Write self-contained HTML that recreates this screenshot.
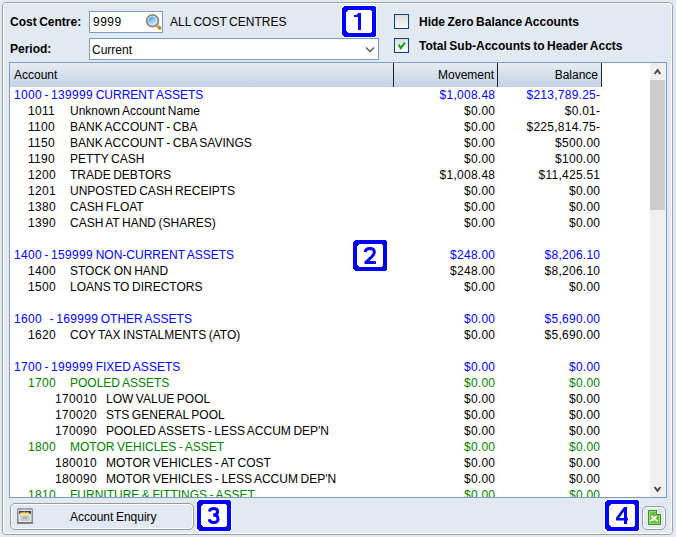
<!DOCTYPE html>
<html><head><meta charset="utf-8">
<style>
*{box-sizing:border-box;margin:0;padding:0}
html,body{width:676px;height:537px;overflow:hidden;background:#e3e9f3;font-family:"Liberation Sans",sans-serif;font-size:12px;color:#000;word-spacing:-0.8px}
.abs{position:absolute}
.frame{position:absolute;left:2px;top:2px;width:671px;height:533px;border:1px solid #a0a0a0;border-radius:4px}
.frame2{position:absolute;left:3px;top:3px;width:669px;height:531px;border:1px solid #fff;border-radius:3px}
.lbl{position:absolute;font-weight:bold;white-space:nowrap;letter-spacing:0;line-height:14px}
.txt{position:absolute;white-space:nowrap;line-height:14px}
.field{position:absolute;background:#fff;border:1px solid #7f9db9}
.badge{position:absolute;width:34px;height:31px;background:#0000ff;}
.badge i{position:absolute;left:4px;top:4px;width:26px;height:23px;background:#fff;}
.badge b{position:absolute;left:0;top:0;width:34px;height:31px;text-align:center;color:#0000ff;font-size:23px;line-height:31px;font-weight:bold}
.cb{position:absolute;width:15px;height:15px;border:1px solid #0e3f78;background:linear-gradient(#dcdcd7,#fbfbfa)}
.tbl{position:absolute;left:9px;top:62px;width:658px;height:436px;border:1px solid #7b9ebd;background:#fff;overflow:hidden}
.hdr{position:absolute;left:0;top:0;width:591px;height:24px;background:linear-gradient(#e6ecf4,#c4d2e3)}
.sep{position:absolute;top:0;width:1px;height:24px;background:#222}
.rows{position:absolute;left:0;top:24px;width:640px}
.r{position:relative;height:16px;line-height:16px;white-space:nowrap}
.r>span{position:absolute;top:0}
.c0{left:4px}.c1{left:18px}.n1{left:60px}.c2{left:45px}.n2{left:96px}.mv{right:154.75px;letter-spacing:.25px}.bl{right:49.75px;letter-spacing:.25px}.c1,.c2,.dg{letter-spacing:.33px}
.b{color:#0000ff}.g{color:#008000}
.btn{position:absolute;border:1px solid #9a9a9a;border-radius:5px;box-shadow:inset 0 0 0 1px #fff;background:#e3e9f3}
.sb{position:absolute;left:640px;top:0;width:16px;height:434px;background:#f0f0f0}
.thumb{position:absolute;left:0;top:17px;width:15px;height:130px;background:#cdcdcd}
</style></head><body>
<div class="frame"></div><div class="frame2"></div>

<div class="lbl" style="left:10px;top:15px">Cost Centre:</div>
<div class="field" style="left:89px;top:11px;width:74px;height:22px"></div>
<div class="txt" style="left:93px;top:15px;letter-spacing:.5px">9999</div>
<svg class="abs" style="left:144px;top:12px" width="20" height="20" viewBox="0 0 20 20">
<defs><linearGradient id="lens" x1="0.2" y1="0.1" x2="0.8" y2="0.9"><stop offset="0" stop-color="#4d9be6"/><stop offset="0.55" stop-color="#9ad2f3"/><stop offset="1" stop-color="#c4ebfb"/></linearGradient>
<linearGradient id="hdl" x1="0" y1="0" x2="1" y2="1"><stop offset="0" stop-color="#e8f0f8"/><stop offset="0.45" stop-color="#f0b030"/><stop offset="1" stop-color="#c87a10"/></linearGradient></defs>
<path d="M12.6 13L15.8 16.2" stroke="#c0882a" stroke-width="3.2" stroke-linecap="round"/>
<path d="M12.6 13L15.6 16" stroke="url(#hdl)" stroke-width="1.8" stroke-linecap="round"/>
<circle cx="8.5" cy="8.7" r="5.8" fill="#fff" stroke="#888" stroke-width="1.9"/>
<circle cx="8.5" cy="8.7" r="4.3" fill="url(#lens)"/>
</svg>
<div class="txt" style="left:170px;top:15px">ALL COST CENTRES</div>
<div class="lbl" style="left:10px;top:42px">Period:</div>
<div class="field" style="left:89px;top:38px;width:290px;height:22px"></div>
<div class="txt" style="left:92px;top:43px">Current</div>
<svg class="abs" style="left:364px;top:45px" width="12" height="9" viewBox="0 0 12 9"><path d="M2 2.5L6 6.5L10 2.5" fill="none" stroke="#555" stroke-width="1.3"/></svg>


<svg class="abs" style="left:341px;top:5px" width="36" height="33" viewBox="0 0 36 33" shape-rendering="crispEdges"><path d="M2 0H34L36 2V31L34 33H2L0 31V2Z" fill="#fff" fill-opacity=".85"/><path d="M3 1H33L35 3V30L33 32H3L1 30V3Z" fill="#00f"/><path d="M7 5H29L31 7V26L29 28H7L5 26V7Z" fill="#fff"/><g shape-rendering="auto" transform="translate(1,1)"><path d="M12 9H14.5L16.2 7H19V24H16V11H12Z" fill="#00f"/></g></svg>

<div class="cb" style="left:394px;top:14px"></div>
<div class="lbl" style="left:419px;top:15px">Hide Zero Balance Accounts</div>
<div class="cb" style="left:394px;top:38px"></div>
<svg class="abs" style="left:394px;top:38px" width="15" height="15" viewBox="0 0 15 15"><path d="M4.7 6.6L6.7 10.2L10.9 4.7" fill="none" stroke="#1a9c1a" stroke-width="2"/></svg>
<div class="lbl" style="left:419px;top:39px">Total Sub-Accounts to Header Accts</div>

<div class="tbl">
  <div class="hdr">
    <div class="txt" style="left:4px;top:5px">Account</div>
    <div class="sep" style="left:383px"></div>
    <div class="txt" style="right:107px;top:5px">Movement</div>
    <div class="sep" style="left:487px"></div>
    <div class="txt" style="right:3px;top:5px">Balance</div>
    <div class="sep" style="left:591px"></div>
  </div>
  <div class="rows" id="rows">
<div class="r b"><span class="c0"><span class="dg">1000</span> - <span class="dg">139999</span> CURRENT ASSETS</span><span class="mv">$1,008.48</span><span class="bl">$213,789.25-</span></div>
<div class="r"><span class="c1">1011</span><span class="n1">Unknown Account Name</span><span class="mv">$0.00</span><span class="bl">$0.01-</span></div>
<div class="r"><span class="c1">1100</span><span class="n1">BANK ACCOUNT - CBA</span><span class="mv">$0.00</span><span class="bl">$225,814.75-</span></div>
<div class="r"><span class="c1">1150</span><span class="n1">BANK ACCOUNT - CBA SAVINGS</span><span class="mv">$0.00</span><span class="bl">$500.00</span></div>
<div class="r"><span class="c1">1190</span><span class="n1">PETTY CASH</span><span class="mv">$0.00</span><span class="bl">$100.00</span></div>
<div class="r"><span class="c1">1200</span><span class="n1">TRADE DEBTORS</span><span class="mv">$1,008.48</span><span class="bl">$11,425.51</span></div>
<div class="r"><span class="c1">1201</span><span class="n1">UNPOSTED CASH RECEIPTS</span><span class="mv">$0.00</span><span class="bl">$0.00</span></div>
<div class="r"><span class="c1">1380</span><span class="n1">CASH FLOAT</span><span class="mv">$0.00</span><span class="bl">$0.00</span></div>
<div class="r"><span class="c1">1390</span><span class="n1">CASH AT HAND (SHARES)</span><span class="mv">$0.00</span><span class="bl">$0.00</span></div>
<div class="r"></div>
<div class="r b"><span class="c0"><span class="dg">1400</span> - <span class="dg">159999</span> NON-CURRENT ASSETS</span><span class="mv">$248.00</span><span class="bl">$8,206.10</span></div>
<div class="r"><span class="c1">1400</span><span class="n1">STOCK ON HAND</span><span class="mv">$248.00</span><span class="bl">$8,206.10</span></div>
<div class="r"><span class="c1">1500</span><span class="n1">LOANS TO DIRECTORS</span><span class="mv">$0.00</span><span class="bl">$0.00</span></div>
<div class="r"></div>
<div class="r b"><span class="c0"><span class="dg">1600</span>&nbsp;&nbsp; - <span class="dg">169999</span> OTHER ASSETS</span><span class="mv">$0.00</span><span class="bl">$5,690.00</span></div>
<div class="r"><span class="c1">1620</span><span class="n1">COY TAX INSTALMENTS (ATO)</span><span class="mv">$0.00</span><span class="bl">$5,690.00</span></div>
<div class="r"></div>
<div class="r b"><span class="c0"><span class="dg">1700</span> - <span class="dg">199999</span> FIXED ASSETS</span><span class="mv">$0.00</span><span class="bl">$0.00</span></div>
<div class="r g"><span class="c1">1700</span><span class="n1">POOLED ASSETS</span><span class="mv">$0.00</span><span class="bl">$0.00</span></div>
<div class="r"><span class="c2">170010</span><span class="n2">LOW VALUE POOL</span><span class="mv">$0.00</span><span class="bl">$0.00</span></div>
<div class="r"><span class="c2">170020</span><span class="n2">STS GENERAL POOL</span><span class="mv">$0.00</span><span class="bl">$0.00</span></div>
<div class="r"><span class="c2">170090</span><span class="n2">POOLED ASSETS - LESS ACCUM DEP'N</span><span class="mv">$0.00</span><span class="bl">$0.00</span></div>
<div class="r g"><span class="c1">1800</span><span class="n1">MOTOR VEHICLES - ASSET</span><span class="mv">$0.00</span><span class="bl">$0.00</span></div>
<div class="r"><span class="c2">180010</span><span class="n2">MOTOR VEHICLES - AT COST</span><span class="mv">$0.00</span><span class="bl">$0.00</span></div>
<div class="r"><span class="c2">180090</span><span class="n2">MOTOR VEHICLES - LESS ACCUM DEP'N</span><span class="mv">$0.00</span><span class="bl">$0.00</span></div>
<div class="r g"><span class="c1">1810</span><span class="n1">FURNITURE &amp; FITTINGS - ASSET</span><span class="mv">$0.00</span><span class="bl">$0.00</span></div>
  </div>
  <div class="sb"><div class="thumb"></div>
    <svg class="abs" style="left:0;top:0" width="16" height="18" viewBox="0 0 16 18"><path d="M4.6 11L7.5 7.2L10.4 11" fill="none" stroke="#4a4a4a" stroke-width="2"/></svg>
    <svg class="abs" style="left:0;top:417px" width="16" height="18" viewBox="0 0 16 18"><path d="M4.6 7L7.5 10.8L10.4 7" fill="none" stroke="#4a4a4a" stroke-width="2"/></svg>
  </div>
</div>

<svg class="abs" style="left:352px;top:239px" width="36" height="33" viewBox="0 0 36 33" shape-rendering="crispEdges"><path d="M2 0H34L36 2V31L34 33H2L0 31V2Z" fill="#fff" fill-opacity=".85"/><path d="M3 1H33L35 3V30L33 32H3L1 30V3Z" fill="#00f"/><path d="M7 5H29L31 7V26L29 28H7L5 26V7Z" fill="#fff"/><g shape-rendering="auto" transform="translate(1,1)"><path d="M12.2 12.2C12.4 9.8 14.2 8.5 17 8.5C19.8 8.5 21.3 10 21.3 12.3C21.3 14 20.5 15 18.8 16.8L13 22.2V22.5H23" fill="none" stroke="#00f" stroke-width="3" stroke-linejoin="miter"/></g></svg>

<svg class="abs" style="left:196px;top:499px" width="36" height="33" viewBox="0 0 36 33" shape-rendering="crispEdges"><path d="M2 0H34L36 2V31L34 33H2L0 31V2Z" fill="#fff" fill-opacity=".85"/><path d="M3 1H33L35 3V30L33 32H3L1 30V3Z" fill="#00f"/><path d="M7 5H29L31 7V26L29 28H7L5 26V7Z" fill="#fff"/><g shape-rendering="auto" transform="translate(1,1)"><path d="M12.4 11.5C12.8 9.5 14.4 8.5 16.7 8.5C19.2 8.5 20.6 9.8 20.6 11.8C20.6 13.8 19 15 16.2 15M16.2 15C19.4 15 21 16.5 21 18.7C21 21 19.2 22.5 16.5 22.5C14.2 22.5 12.6 21.4 12.2 19.3" fill="none" stroke="#00f" stroke-width="3"/></g></svg>
<svg class="abs" style="left:604px;top:499px" width="36" height="33" viewBox="0 0 36 33" shape-rendering="crispEdges"><path d="M2 0H34L36 2V31L34 33H2L0 31V2Z" fill="#fff" fill-opacity=".85"/><path d="M3 1H33L35 3V30L33 32H3L1 30V3Z" fill="#00f"/><path d="M7 5H29L31 7V26L29 28H7L5 26V7Z" fill="#fff"/><g shape-rendering="auto" transform="translate(1,1)"><path d="M19 7H22V18H23V20.5H22V24H19V20.5H11V17.8ZM19 11.5L14.2 18H19Z" fill="#00f" fill-rule="evenodd"/></g></svg>

<div class="btn" style="left:10px;top:503px;width:184px;height:27px"></div>
<svg class="abs" style="left:16px;top:507px" width="18" height="18" viewBox="0 0 18 18">
<defs><linearGradient id="cab" x1="0" y1="0" x2="0" y2="1"><stop offset="0" stop-color="#dcdcdc"/><stop offset="1" stop-color="#b4b4b4"/></linearGradient>
<linearGradient id="cabs" x1="0" y1="0" x2="1" y2="0"><stop offset="0" stop-color="#8c8c8c"/><stop offset="0.5" stop-color="#a8a8a8"/><stop offset="1" stop-color="#8c8c8c"/></linearGradient></defs>
<path d="M1 3Q1 1 3 1H15Q17 1 17 3V17H1Z" fill="url(#cabs)"/>
<rect x="2.2" y="2.6" width="13.6" height="12.4" fill="url(#cab)"/>
<rect x="3" y="4" width="12" height="3.4" fill="#3e4660"/>
<path d="M3.6 7.4L4.6 5.2L6.6 5.6L8.2 4.6L9.6 5.8L11.6 5L13.4 6.2L14.4 7.4Z" fill="#f4d838"/>
<rect x="3.6" y="7.6" width="10.8" height="6.8" fill="#cdcdcd" stroke="#ececec" stroke-width="1"/>
<path d="M7 12.2V11Q7 9.8 9 9.8Q11 9.8 11 11V12.2H10V11.2H8V12.2Z" fill="#a4a4a4"/>
<rect x="1" y="15" width="16" height="2" fill="#7c7c7c"/>
</svg>
<div class="txt" style="left:70px;top:510px">Account Enquiry</div>
<div class="btn" style="left:642px;top:506px;width:24px;height:24px"></div>
<svg class="abs" style="left:647px;top:509px" width="16" height="18" viewBox="0 0 16 18">
<path d="M1.5 1.5H10L13.5 5V15.5H1.5Z" fill="#68bb3a" stroke="#3a961c"/>
<path d="M2.5 2.5H9.6L12.5 5.4V14.5H2.5Z" fill="none" stroke="#98da70"/>
<rect x="3" y="3" width="6.2" height="2.4" fill="#7ab850"/>
<path d="M10 1V5H14Z" fill="#fff"/>
<path d="M9.5 1.5V5.5H13.5" fill="none" stroke="#3a961c"/>
<path d="M4.2 6.8L10.6 12.4M9.6 7L4.4 11.4H6.6" fill="none" stroke="#fff" stroke-width="1.7"/>
</svg>
</body></html>
